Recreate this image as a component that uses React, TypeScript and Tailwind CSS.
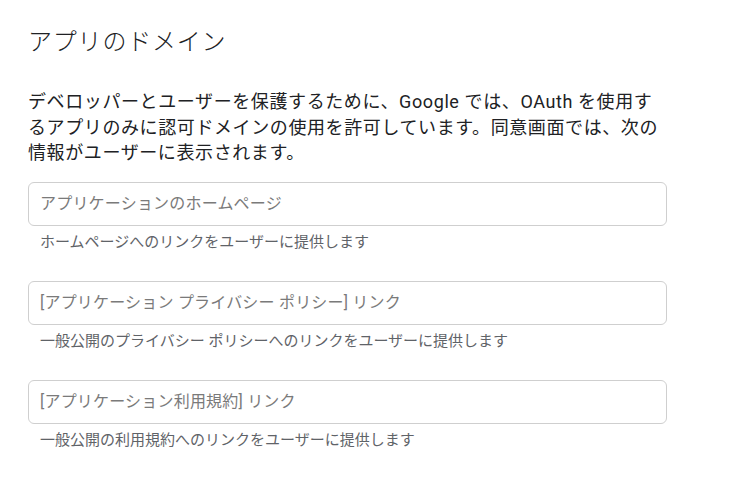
const fields = [
  {
    placeholder: "アプリケーションのホームページ",
    help: "ホームページへのリンクをユーザーに提供します",
  },
  {
    placeholder: "[アプリケーション プライバシー ポリシー] リンク",
    help: "一般公開のプライバシー ポリシーへのリンクをユーザーに提供します",
  },
  {
    placeholder: "[アプリケーション利用規約] リンク",
    help: "一般公開の利用規約へのリンクをユーザーに提供します",
  },
];

const App = () => {
  return (
    <div
      className="w-[742px] h-[496px] bg-white pl-[28px] pt-[26px] text-[#202124]"
      style={{ fontFamily: 'Roboto, "Noto Sans CJK JP", sans-serif' }}
    >
      <h1 className="text-[24px] leading-[32px] font-light tracking-[0.8px]">アプリのドメイン</h1>
      <p className="mt-[31px] w-[641px] text-[18px] leading-[25.5px] tracking-[0.6px]">
        デベロッパーとユーザーを保護するために、Google では、OAuth を使用するアプリのみに認可ドメインの使用を許可しています。同意画面では、次の情報がユーザーに表示されます。
      </p>
      <div className="mt-[16px] flex flex-col gap-[29px] w-[639px]">
        {fields.map((f) => (
          <div key={f.placeholder}>
            <input
              type="text"
              placeholder={f.placeholder}
              className="block w-full h-[44px] rounded-[6px] border border-[#cfcfcf] px-[11px] text-[16px] tracking-[0.2px] text-[#202124] placeholder:text-[#7a7a7a] outline-none"
            />
            <p className="mt-[6px] pl-[12px] text-[15px] leading-[20px] text-[#5f6368]">{f.help}</p>
          </div>
        ))}
      </div>
    </div>
  );
};

export default App;
